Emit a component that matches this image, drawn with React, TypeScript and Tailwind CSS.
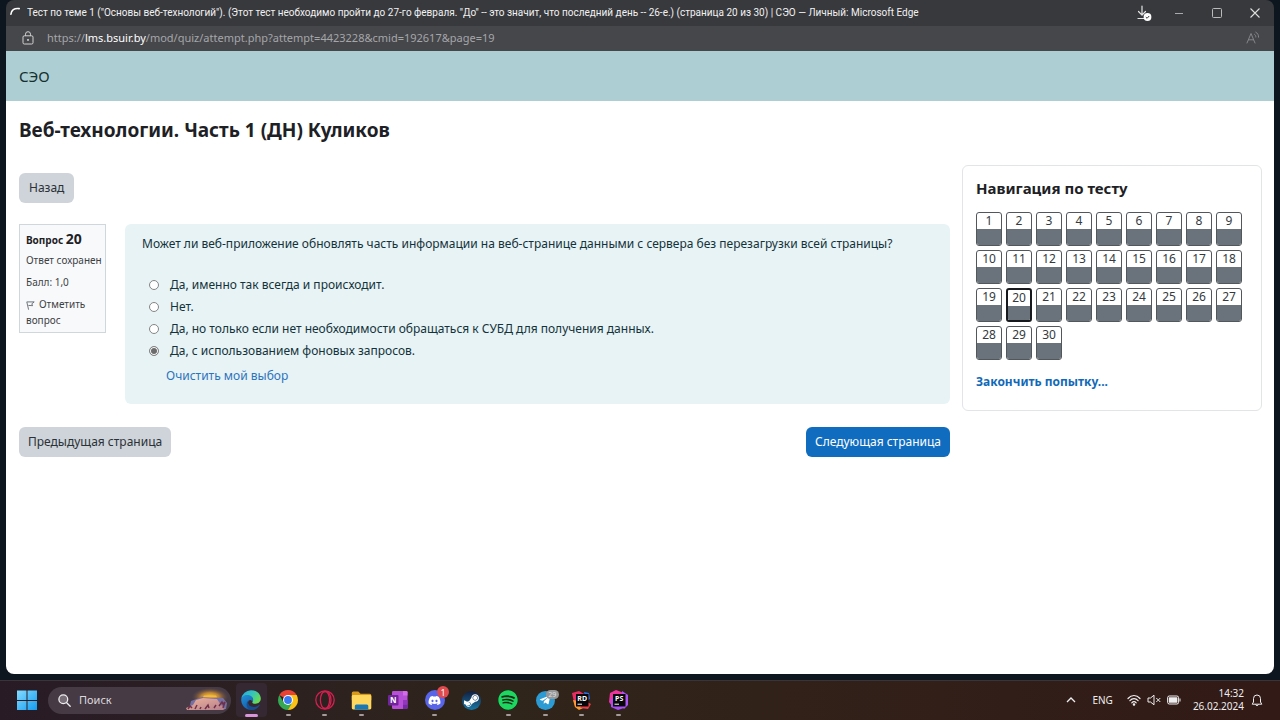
import type { ReactNode } from "react";
import { FaDiscord, FaSpotify, FaSteamSymbol, FaTelegramPlane } from "react-icons/fa";

const answers = [
  "Да, именно так всегда и происходит.",
  "Нет.",
  "Да, но только если нет необходимости обращаться к СУБД для получения данных.",
  "Да, с использованием фоновых запросов.",
];

const questions = Array.from({ length: 30 }, (_, i) => i + 1);

function TitleBar() {
  return (
    <div className="flex h-[26px] items-center bg-[#38393d] pl-1 text-[#f1f1f1]">
      <svg className="mr-[5px] size-3 shrink-0" viewBox="0 0 12 12" fill="none" stroke="#fff" strokeWidth="1.6" strokeLinecap="round" aria-hidden="true">
        <path d="M.9 7.2C1.2 3.4 4.2.9 9.2 1.6" />
      </svg>
      <p className="min-w-0 flex-1 truncate font-[Roboto,sans-serif] text-[10px] leading-4">
        Тест по теме 1 ("Основы веб-технологий"). (Этот тест необходимо пройти до 27-го февраля. "До" -- это значит, что последний день -- 26-е.) (страница 20 из 30) | СЭО — Личный: Microsoft Edge
      </p>
      <div className="flex items-center">
        <button type="button" aria-label="Загрузки" className="flex w-8 justify-center">
          <svg className="size-4" viewBox="0 0 16 16" fill="none" aria-hidden="true">
            <path d="M6 1v9M2.5 6.5 6 10.2l3.500-3.700M2 13.500h6" stroke="#e4e4e4" strokeWidth="1.2" strokeLinecap="round" strokeLinejoin="round" />
            <circle cx="11.5" cy="12" r="3.9" fill="#fff" />
            <path d="m9.8 12.1 1.3 1.2 2.1-2.3" stroke="#333" strokeWidth="1" />
          </svg>
        </button>
        <button type="button" aria-label="Свернуть" className="flex w-[38px] justify-center">
          <svg className="size-[10px]" viewBox="0 0 10 10" stroke="#aaa" aria-hidden="true"><path d="M1 5.500h8" /></svg>
        </button>
        <button type="button" aria-label="Развернуть" className="flex w-[38px] justify-center">
          <svg className="size-[10px]" viewBox="0 0 10 10" fill="none" stroke="#bbb" aria-hidden="true"><rect x=".5" y=".5" width="9" height="9" rx="1" /></svg>
        </button>
        <button type="button" aria-label="Закрыть" className="flex w-[38px] justify-center">
          <svg className="size-[10px]" viewBox="0 0 10 10" stroke="#ddd" strokeWidth="1.1" aria-hidden="true"><path d="m.5.5 9 9m0-9-9 9" /></svg>
        </button>
      </div>
    </div>
  );
}

function AddressBar() {
  return (
    <div className="flex h-[25px] items-center bg-[#46474b] pr-[14px] pb-[1px] pl-4">
      <svg className="mr-[13px] h-[14px] w-3 shrink-0" viewBox="0 0 12 14" fill="none" stroke="#d2d2d2" aria-hidden="true">
        <rect x="1" y="4.8" width="10" height="8.2" rx="1.3" />
        <path d="M3.5 4.8V3.2a2.5 2.5 0 0 1 5 0v1.6" />
        <circle cx="6" cy="8.9" r=".6" fill="#d2d2d2" />
      </svg>
      <p className="min-w-0 flex-1 truncate text-[11px] leading-4 text-[#a5a6a9]">
        https://<span className="text-white">lms.bsuir.by</span>/mod/quiz/attempt.php?attempt=4423228&cmid=192617&page=19
      </p>
      <button type="button" aria-label="Прочесть вслух">
        <svg className="size-[14px]" viewBox="0 0 14 14" fill="none" stroke="#85868a" strokeLinecap="round" aria-hidden="true">
          <path d="M1 12 5 2.5 9 12M2.4 8.8h5.2M8.6 3.4c.9.6 1.3 1.5 1.2 2.6M9.8 1.2c1.9 1 2.9 2.8 2.8 5" />
        </svg>
      </button>
    </div>
  );
}

function QuestionInfo() {
  return (
    <aside className="w-[87px] shrink-0 border border-[#cfd6dc] bg-[#f8f9fa] px-[6px] py-1 text-[10px] text-[#3d4246]">
      <h3 className="font-bold text-[#1d2125]">
        Вопрос <span className="text-[14px] leading-5">20</span>
      </h3>
      <p className="mt-[3px] leading-4 whitespace-nowrap">Ответ сохранен</p>
      <p className="mt-[6px] leading-4">Балл: 1,0</p>
      <a href="#flag" className="mt-[6px] block leading-4">
        <svg className="mr-1 inline size-[9px]" viewBox="0 0 9 9" fill="none" stroke="#62686d" strokeWidth=".9" aria-hidden="true">
          <path d="M.8.9h7.400L5.800 2.800l.8 1.900-4.200-.3M.8.9l1.800 7.800" />
        </svg>
        Отметить вопрос
      </a>
    </aside>
  );
}

function Question() {
  return (
    <section className="min-w-0 flex-1 rounded-md bg-[#e7f3f5] px-[17px] pt-[10px] pb-[18px] text-[12px] text-[#14323a]">
      <fieldset>
        <legend className="mb-5 leading-5">
          Может ли веб-приложение обновлять часть информации на веб-странице данными с сервера без перезагрузки всей страницы?
        </legend>
        {answers.map((answer, i) => (
          <label key={answer} className="flex h-[22px] items-center pl-[7px]">
            <input
              type="radio"
              name="answer"
              defaultChecked={i === 3}
              className="mr-[11px] size-[10px] shrink-0 appearance-none rounded-full border border-[#858585] bg-white checked:bg-[#6c6c6c] checked:shadow-[inset_0_0_0_1px_#fff]"
            />
            {answer}
          </label>
        ))}
      </fieldset>
      <a href="#clear" className="mt-1 ml-6 inline-block leading-5 text-[#2d73bd]">
        Очистить мой выбор
      </a>
    </section>
  );
}

function QuizNavigation() {
  return (
    <nav className="mt-1 w-[300px] shrink-0 rounded-md border border-[#e2e4e6] bg-white px-[13px] pt-[10px] pb-[18px]">
      <h2 className="text-[15px] leading-6 font-bold text-[#1d2125]">Навигация по тесту</h2>
      <div className="mt-3 flex flex-wrap gap-1">
        {questions.map((n) => (
          <a
            key={n}
            href={`#q${n}`}
            className={
              n === 20
                ? "flex h-[34px] w-[26px] flex-col overflow-hidden rounded-[3px] border-2 border-[#17191c] text-center text-[12px] leading-4 text-[#343a40]"
                : "flex h-[34px] w-[26px] flex-col overflow-hidden rounded-[3px] border border-[#52575c] text-center text-[12px] leading-4 text-[#343a40]"
            }
          >
            {n}
            <span className="flex-1 bg-[#6a737b]" />
          </a>
        ))}
      </div>
      <a href="#finish" className="mt-3 inline-block text-[12px] leading-5 font-bold text-[#1169b8]">
        Закончить попытку...
      </a>
    </nav>
  );
}

function Page() {
  return (
    <main className="flex-1 bg-white">
      <header className="flex h-[50px] items-center bg-[#adced3] px-[13px] text-[15px] text-[#15302f]">СЭО</header>
      <div className="pr-3 pl-[13px]">
        <h1 className="pt-[15px] pb-[17px] text-[19px] leading-7 font-bold text-[#1d2125]">Веб-технологии. Часть 1 (ДН) Куликов</h1>
        <div className="flex items-start gap-3">
          <div className="min-w-0 flex-1 pt-3">
            <button type="button" className="h-[30px] rounded-md bg-[#ced4da] px-[10px] text-[12px] text-[#2b3136]">
              Назад
            </button>
            <div className="mt-[21px] flex items-start gap-[19px]">
              <QuestionInfo />
              <Question />
            </div>
            <div className="mt-[23px] flex justify-between text-[12px]">
              <button type="button" className="h-[30px] rounded-md bg-[#ced4da] px-[9px] text-[#2b3136]">
                Предыдущая страница
              </button>
              <button type="button" className="h-[30px] rounded-md bg-[#0f6cbf] px-[9px] text-white">
                Следующая страница
              </button>
            </div>
          </div>
          <QuizNavigation />
        </div>
      </div>
    </main>
  );
}

function SearchArt() {
  return (
    <svg className="h-6 w-[44px]" viewBox="0 0 44 24" aria-hidden="true">
      <defs>
        <radialGradient id="sun"><stop offset="0" stopColor="#ffd13b" /><stop offset=".5" stopColor="#b98237" /><stop offset="1" stopColor="#6a4b40" stopOpacity="0" /></radialGradient>
        <linearGradient id="cliff" x2="1" y2="1"><stop stopColor="#f0b49b" /><stop offset="1" stopColor="#b37f8c" /></linearGradient>
      </defs>
      <ellipse cx="25" cy="9" rx="18" ry="9" fill="url(#sun)" />
      <path d="M6 13 17 9l21 1 4 5-1 6H4z" fill="#7770a3" />
      <path d="m1 20 7-3 3-5 7-2 14 1 4 6 4 4-2 1H2z" fill="url(#cliff)" />
      <path d="M19 7.500h12l1 1.700H18z" fill="#ffb82f" />
      <path d="m3 21 2-3 2 2m3 1 2-4m3 4 1-2m4 2 3-4 1 3m5 0 2-3m3 1 3-4 1 2 2-2-2 6" fill="none" stroke="#71304a" strokeWidth="1.5" />
    </svg>
  );
}

function EdgeIcon() {
  return (
    <svg className="size-5" viewBox="0 0 20 20" aria-hidden="true">
      <defs>
        <linearGradient id="edgeTop" x2="1" y2=".6"><stop stopColor="#26a6df" /><stop offset=".5" stopColor="#32c4bf" /><stop offset="1" stopColor="#68dc55" /></linearGradient>
        <linearGradient id="edgeLow" y2="1" x2=".7"><stop stopColor="#2193da" /><stop offset="1" stopColor="#1456a0" /></linearGradient>
      </defs>
      <path d="M.3 9A9.8 9.8 0 0 1 10 .2c5.700 0 9.800 4 9.800 8.400 0 3.300-2.500 5.200-5.200 5.200-2.800 0-3.700-1-3.100-2 1.200-2 .2-5-3-5C4.700 6.800 1 7 .3 9z" fill="url(#edgeTop)" />
      <path d="M.2 9.800C.5 6.800 3 5 6 5c3.400 0 6.200 2 6.200 4.700 0 1-.5 1.500-.7 2C9.500 8 6 11 7.300 14.400c1.100 3 4.500 4.800 8.600 3.300-4.900 3.800-11 2.200-13.700-1.700A9.500 9.500 0 0 1 .2 9.800z" fill="url(#edgeLow)" />
      <path d="M7.400 10.400c-1.500 4 2 7 6 6.500 2-.2 3.800-1.300 4.700-2 .4-.3.800.1.500.5-2.200 3.500-5.500 4.900-8.800 4.400-4.200-.8-5.800-6.500-2.400-9.400z" fill="#164f91" />
    </svg>
  );
}

function ChromeIcon() {
  return (
    <svg className="size-5" viewBox="0 0 20 20" aria-hidden="true">
      <path d="M10 10 1.340 5A10 10 0 0 1 18.660 5z" fill="#e94235" />
      <path d="M10 10V5h8.660A10 10 0 0 1 10 20z" fill="#fbc116" />
      <path d="M5.670 12.500 1.340 5A10 10 0 0 0 10 20l4.330-7.500z" fill="#34a853" />
      <circle cx="10" cy="10" r="5" fill="#fff" />
      <circle cx="10" cy="10" r="3.900" fill="#397af2" />
    </svg>
  );
}

function OperaIcon() {
  return (
    <svg className="size-5" viewBox="0 0 20 20" fill="none" stroke="#d41f50" strokeWidth="1.300" aria-hidden="true">
      <circle cx="10" cy="10" r="9.200" />
      <ellipse cx="10" cy="10" rx="4.600" ry="8.600" />
      <path d="M8 2c5.500-1.500 8 2.500 8 8s-2.500 9.500-8 8" />
    </svg>
  );
}

function FolderIcon() {
  return (
    <svg className="size-[21px]" viewBox="0 0 21 21" aria-hidden="true">
      <path d="M.8 3Q.8 1.500 2.300 1.500h5l2.200 2.200h9.300q1.500 0 1.500 1.500v5H.8z" fill="#d99a1b" />
      <rect x=".8" y="5" width="19.500" height="14.500" rx="1.400" fill="#ffd75e" />
      <path d="M3.800 19.500V16q0-1.500 1.500-1.500h10.500q1.500 0 1.500 1.500v3.500z" fill="#1979b8" />
    </svg>
  );
}

function OneNoteIcon() {
  return (
    <svg className="size-5" viewBox="0 0 20 20" aria-hidden="true">
      <rect x="4" y="1" width="15.500" height="18" rx="1.200" fill="#b750d6" />
      <path d="M15 1h3.300q1.200 0 1.200 1.200V5.500H15z" fill="#d46be8" />
      <path d="M15 10h4.500v4.500H15z" fill="#9137bd" />
      <path d="M15 14.500h4.500v3.300q0 1.200-1.200 1.200H15z" fill="#7529a5" />
      <rect x="0" y="5" width="10.500" height="10.500" rx="1" fill="#71249d" />
      <text x="5.200" y="13" textAnchor="middle" fontSize="8" fontWeight="700" fill="#fff">N</text>
    </svg>
  );
}

function DiscordIcon() {
  return (
    <span className="relative flex size-5 items-center justify-center rounded-full bg-[#5865e8]">
      <FaDiscord className="size-[13px] text-white" />
      <span className="absolute -top-1 left-[12px] flex size-3 items-center justify-center rounded-full bg-[#df4b4e] text-[9px] leading-none text-white">1</span>
    </span>
  );
}

function SteamIcon() {
  return (
    <span className="flex size-[19px] items-center justify-center rounded-full bg-linear-to-b from-[#10203f] to-[#1578a7]">
      <FaSteamSymbol className="size-[17px] text-white" />
    </span>
  );
}

function SpotifyIcon() {
  return (
    <span className="flex size-5 items-center justify-center rounded-full bg-[#102c18]">
      <FaSpotify className="size-5 text-[#1ed760]" />
    </span>
  );
}

function TelegramIcon() {
  return (
    <span className="relative flex size-[19px] items-center justify-center rounded-full bg-[#2c9bd3]">
      <FaTelegramPlane className="size-3 text-white" />
      <span className="absolute -top-[1px] left-[10px] flex h-[9px] w-[13px] items-center justify-center rounded-full bg-[#96989a] text-[7px] leading-none text-[#e0e0e0]">29</span>
    </span>
  );
}

function RiderIcon() {
  return (
    <svg className="size-5" viewBox="0 0 20 20" aria-hidden="true">
      <path d="m0 3 7-2 7 4-4 14-7-2z" fill="#e82d62" />
      <path d="m1 10 5 1 5 7-4 2-4-3z" fill="#fb9a32" />
      <path d="m12 2 5 1 1 6-4 2z" fill="#286fea" />
      <path d="m13 11 6 3-3 5-8-1z" fill="#ef3e46" />
      <rect x="4" y="4" width="12.500" height="12.500" fill="#08060a" />
      <text x="10.200" y="10.500" textAnchor="middle" fontSize="7" fontWeight="700" fill="#fff">RD</text>
      <path d="M5.500 14.200h4.500" stroke="#fff" />
    </svg>
  );
}

function PhpStormIcon() {
  return (
    <svg className="size-5" viewBox="0 0 20 20" aria-hidden="true">
      <path d="m1 3 6-3 8 3-3 9-9 4-3-4z" fill="#f0339e" />
      <path d="m2 9 5-1 8 10-6 2-7-3z" fill="#a64ef5" />
      <path d="m13 1 6 4v10l-4 4-4-5z" fill="#ab55f6" />
      <rect x="4" y="4" width="12.500" height="12.500" fill="#08060a" />
      <text x="10.200" y="10.500" textAnchor="middle" fontSize="7" fontWeight="700" fill="#fff">PS</text>
      <path d="M5.500 14.200h4.500" stroke="#fff" />
    </svg>
  );
}

const apps: { name: string; icon: ReactNode; state: "active" | "open" | "closed" }[] = [
  { name: "Microsoft Edge", icon: <EdgeIcon />, state: "active" },
  { name: "Chrome", icon: <ChromeIcon />, state: "open" },
  { name: "Opera", icon: <OperaIcon />, state: "open" },
  { name: "Проводник", icon: <FolderIcon />, state: "open" },
  { name: "OneNote", icon: <OneNoteIcon />, state: "closed" },
  { name: "Discord", icon: <DiscordIcon />, state: "open" },
  { name: "Steam", icon: <SteamIcon />, state: "closed" },
  { name: "Spotify", icon: <SpotifyIcon />, state: "open" },
  { name: "Telegram", icon: <TelegramIcon />, state: "open" },
  { name: "Rider", icon: <RiderIcon />, state: "open" },
  { name: "PhpStorm", icon: <PhpStormIcon />, state: "open" },
];

const markers = {
  active: "absolute bottom-0 h-[3px] w-[13px] rounded-full bg-[#d795dc]",
  open: "absolute bottom-[1px] h-[2px] w-[5px] rounded-full bg-[#a49b9a]",
  closed: "hidden",
};

function Taskbar() {
  return (
    <footer className="flex h-10 items-center border-t border-[#38343a] bg-linear-to-r from-[#281b26] via-[#30251a] via-40% to-[#321a17] px-[17px] pb-[1px] text-[#eee]">
      <button type="button" aria-label="Пуск" className="mr-[11px]">
        <svg className="size-5" viewBox="0 0 20 20" aria-hidden="true">
          <defs><linearGradient id="win" x2="1" y2="1"><stop stopColor="#84dcff" /><stop offset="1" stopColor="#139cf0" /></linearGradient></defs>
          <path d="M0 .5h9.500V10H0zM10.500.5H20V10h-9.500zM0 11h9.500v9H0zM10.500 11H20v9h-9.500z" fill="url(#win)" />
        </svg>
      </button>
      <div className="mr-[2px] flex h-[27px] w-[183px] items-center rounded-full bg-[#463b45] pr-[2px] pl-[10px]">
        <svg className="mr-2 size-[13px] shrink-0" viewBox="0 0 13 13" fill="none" stroke="#eee" strokeWidth="1.300" strokeLinecap="round" aria-hidden="true">
          <circle cx="5.300" cy="5.300" r="4.400" fill="#766d76" /><path d="m8.700 8.700 3.500 3.500" />
        </svg>
        <input aria-label="Поиск" placeholder="Поиск" className="min-w-0 flex-1 bg-transparent text-[11px] outline-none placeholder:text-[#ddd8dd]" />
        <SearchArt />
      </div>
      <div className="grid w-[404px] grid-cols-11">
        {apps.map((app) => (
          <button
            key={app.name}
            type="button"
            aria-label={app.name}
            className={
              app.state === "active"
                ? "relative mx-[3px] flex h-[34px] items-center justify-center rounded-sm bg-[#352832]"
                : "relative flex h-[34px] items-center justify-center"
            }
          >
            {app.icon}
            <span className={markers[app.state]} />
          </button>
        ))}
      </div>
      <div className="ml-auto flex items-center">
        <button type="button" aria-label="Скрытые значки" className="mr-4">
          <svg className="h-[6px] w-[10px]" viewBox="0 0 10 6" fill="none" stroke="#eee" strokeWidth="1.300" aria-hidden="true"><path d="m1 5 4-4 4 4" /></svg>
        </button>
        <span className="mr-[14px] text-[10px]">ENG</span>
        <div className="mr-3 flex items-center gap-[6px]">
          <svg className="h-3 w-[14px]" viewBox="0 0 14 12" fill="none" stroke="#eee" strokeWidth="1.200" strokeLinecap="round" aria-hidden="true">
            <path d="M1 4.500c3.500-4 8.500-4 12 0M2.900 6.700c2.400-2.800 5.800-2.800 8.200 0M4.800 8.800c1.300-1.500 3.100-1.500 4.400 0" /><circle cx="7" cy="10.500" r=".7" fill="#eee" />
          </svg>
          <svg className="h-3 w-[14px]" viewBox="0 0 14 12" fill="none" stroke="#eee" strokeLinejoin="round" aria-hidden="true">
            <path d="M1 4h2.500L7 1.200v9.600L3.500 8H1zM9.300 4l4 4m0-4-4 4" />
          </svg>
          <svg className="h-3 w-[14px]" viewBox="0 0 14 12" fill="none" stroke="#eee" aria-hidden="true">
            <rect x=".6" y="2" width="11" height="8" rx="1.700" /><rect x="1.800" y="3.200" width="8.600" height="5.600" rx=".5" fill="#eee" stroke="none" /><path d="M13 4.500v3" />
          </svg>
        </div>
        <div className="mr-[7px] text-right text-[10px] leading-[13px]">
          <p>14:32</p>
          <p>26.02.2024</p>
        </div>
        <button type="button" aria-label="Уведомления">
          <svg className="h-[13px] w-3" viewBox="0 0 11 13" fill="none" stroke="#eee" strokeLinejoin="round" aria-hidden="true">
            <path d="M2 8V4.500a3.500 3.500 0 0 1 7 0V8l1.300 2.200H.7zM4 10.500a1.600 1.600 0 0 0 3 0" />
          </svg>
        </button>
      </div>
    </footer>
  );
}

export default function App() {
  return (
    <div className="flex min-h-screen flex-col bg-[#0d151e] font-['Noto_Sans',sans-serif]">
      <div className="mx-[6px] mb-[6px] flex flex-1 flex-col overflow-hidden rounded-lg">
        <TitleBar />
        <AddressBar />
        <Page />
      </div>
      <Taskbar />
    </div>
  );
}
